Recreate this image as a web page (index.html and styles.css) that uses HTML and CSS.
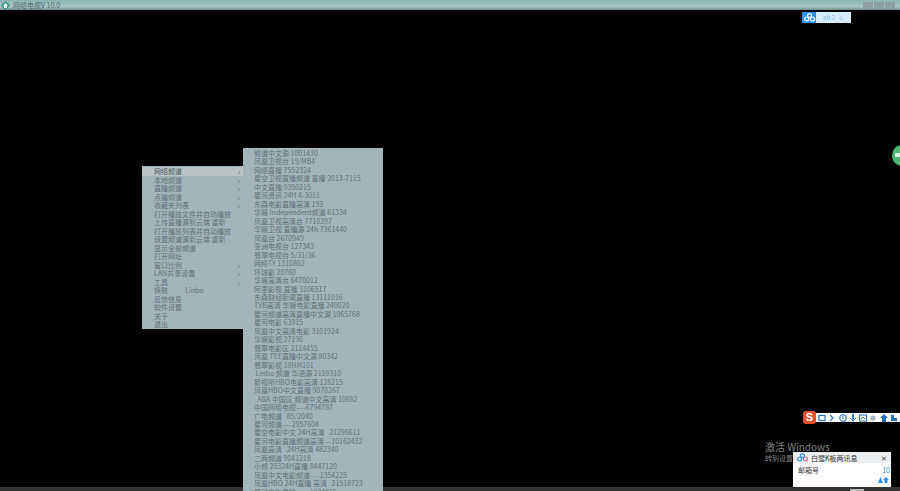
FILE: index.html
```html
<!DOCTYPE html>
<html lang="zh-CN">
<head>
  <meta charset="UTF-8" />
  <meta name="viewport" content="width=device-width, initial-scale=1.0"/>
  <title>网络电视软件</title>
  <link rel="stylesheet" href="styles.css">
</head>
<body>

  <header class="titlebar">
    <svg class="app-icon" width="9" height="9" viewBox="0 0 9 9"><path d="M4.5 0 9 4.5 4.5 9 0 4.500z" fill="#2f9e7c"/><path d="M4.500 2 7 4.500H6V7H3V4.500H2z" fill="#fff"/></svg>
    <span class="app-title">网络电视V 10.0</span>
    <div class="win-buttons">
      <span class="win-btn"></span>
      <span class="win-btn"></span>
      <span class="win-btn"></span>
    </div>
  </header>

  <main class="screen">

    <div class="cloud-badge">
      <span class="cloud-icon">
        <svg width="11" height="9" viewBox="0 0 11 9"><circle cx="5.500" cy="2.600" r="2" fill="none" stroke="#fff" stroke-width="1.200"/><circle cx="2.600" cy="6" r="2" fill="none" stroke="#fff" stroke-width="1.200"/><circle cx="8.400" cy="6" r="2" fill="none" stroke="#fff" stroke-width="1.200"/></svg>
      </span>
      <span class="cloud-text">ab:2 &nbsp;☺</span>
    </div>

    <div class="side-ball"><span class="side-ball-mark"></span></div>

    <ul class="menu main-menu">
      <li class="active">网络频道<i>›</i></li>
      <li>本地频道<i>›</i></li>
      <li>直播频道<i>›</i></li>
      <li>点播频道<i>›</i></li>
      <li>收藏夹列表<i>›</i></li>
      <li>打开播放文件并自动播放</li>
      <li>上传直播源到云端 重新</li>
      <li>打开播放列表并自动播放</li>
      <li>设置频道源到云端 重新</li>
      <li>显示全部频道</li>
      <li>打开网址</li>
      <li>窗口比例<i>›</i></li>
      <li>LAN共享设置<i>›</i></li>
      <li>工具<i>›</i></li>
      <li class="with-note">换肤<span class="note">Linbo</span></li>
      <li>反馈信息</li>
      <li>软件设置</li>
      <li>关于</li>
      <li>退出</li>
    </ul>

    <ul class="menu sub-menu">
      <li>频道中文源 1001430</li>
      <li>凤凰卫视台 19/MB4</li>
      <li>网络直播 7552324</li>
      <li>星空卫视直播频道 直播 2013-7115</li>
      <li>中文直播 9350215</li>
      <li>星河资讯 24H 4-3011</li>
      <li>东森电影直播高清 193</li>
      <li>华娱 Independent频道 61334</li>
      <li>凤凰卫视高清台 7710397</li>
      <li>华娱卫视 直播源 24h 7361440</li>
      <li>凤凰台 2670949</li>
      <li>亚洲电视台 127343</li>
      <li>翡翠电视台 5/31/36</li>
      <li>网络TY 1310802</li>
      <li>环球影 20760</li>
      <li>华娱高清台 6470012</li>
      <li>阿里影视 直播 3106517</li>
      <li>东森财经新闻直播 13111016</li>
      <li>TVB高清 华娱电影直播 240020</li>
      <li>星河频道高清直播中文源 1065768</li>
      <li>星河电影 63915</li>
      <li>凤凰中文高清电影 3101924</li>
      <li>华娱影视 27190</li>
      <li>翡翠电影区 2114455</li>
      <li>凤凰 TEE直播中文源 80342</li>
      <li>翡翠影视 18NM101</li>
      <li>&nbsp;Linbo 频道 华语源 2110310</li>
      <li>新视听HBO电影高清 128215</li>
      <li>凤凰HBO中文直播 9070267</li>
      <li>&nbsp;&nbsp;ABA 中国区 频道中文高清 10682</li>
      <li>中国网络电视----6794787</li>
      <li>广电频道 &nbsp;&nbsp;85/2040</li>
      <li>星河频道----2957604</li>
      <li>星空电影中文 24H高清 &nbsp;&nbsp;21296611</li>
      <li>星河电影直播频道高清---10162432</li>
      <li>凤凰高清 &nbsp;&nbsp;24H高清 482340</li>
      <li>二两频道 9041218</li>
      <li>小频 20324H直播 8447120</li>
      <li>凤凰中文电影频道----1354225</li>
      <li>凤凰HBO 24H直播 高清 &nbsp;&nbsp;21518723</li>
      <li>星河电影直播 -----1034855</li>
    </ul>

    <div class="ime-bar">
      <span class="ime-logo">S</span>
      <span class="ime-icons">
        <svg width="8" height="8" viewBox="0 0 8 8"><rect x="1" y="1.500" width="6" height="5" fill="none" stroke="#2370c4" stroke-width="1.200"/></svg>
        <svg width="8" height="8" viewBox="0 0 8 8"><path d="M2 1 5 4 2 7" fill="none" stroke="#2370c4" stroke-width="1.200"/></svg>
        <svg width="8" height="8" viewBox="0 0 8 8"><circle cx="4" cy="4" r="3.200" fill="none" stroke="#2370c4" stroke-width="1.100"/><path d="M4 2v3" stroke="#2370c4"/></svg>
        <svg width="8" height="8" viewBox="0 0 8 8"><rect x="3" y="0" width="2" height="5" fill="#2370c4"/><path d="M1 4q3 4 6 0M4 6v2" fill="none" stroke="#2370c4"/></svg>
        <svg width="8" height="8" viewBox="0 0 8 8"><rect x=".5" y="1" width="7" height="6" fill="none" stroke="#2370c4"/><path d="M2 5 4 3l2 2" fill="none" stroke="#2370c4"/></svg>
        <svg width="8" height="8" viewBox="0 0 8 8"><circle cx="4" cy="4" r="2.600" fill="#9fb4c4"/></svg>
        <svg width="8" height="8" viewBox="0 0 8 8"><path d="M4 0 8 4H6v4H2V4H0z" fill="#2370c4"/></svg>
        <svg width="8" height="8" viewBox="0 0 8 8"><path d="M1 1h3v3h3v3H1z" fill="#2370c4"/></svg>
      </span>
    </div>

    <div class="activate">
      <div class="activate-title">激活 Windows</div>
      <div class="activate-sub">转到设置</div>
    </div>

    <div class="notice">
      <div class="notice-head">
        <svg width="11" height="9" viewBox="0 0 11 9"><circle cx="5.500" cy="2.600" r="2" fill="none" stroke="#2f8fe8" stroke-width="1.200"/><circle cx="2.600" cy="6" r="2" fill="none" stroke="#2f8fe8" stroke-width="1.200"/><circle cx="8.400" cy="6" r="2" fill="none" stroke="#e86a8a" stroke-width="1.200"/></svg>
        <span class="notice-title">白鹭K板两讯息</span>
        <span class="notice-close">✕</span>
      </div>
      <div class="notice-row"><span>邮箱号</span><span class="notice-count">10</span></div>
      <div class="notice-foot">
        <svg width="11" height="6" viewBox="0 0 11 6"><path d="M2.500 0 5 6H0zM8 0l3 3H9.500v3h-3V3H5z" fill="#2f8fe8"/></svg>
      </div>
    </div>

  </main>

  <footer class="taskbar"><span class="task-mark"></span></footer>

</body>
</html>
```

FILE: styles.css
```css
html, body {
  margin: 0;
  padding: 0;
  height: 100%;
}

body {
  display: flex;
  flex-direction: column;
  width: 900px;
  height: 491px;
  overflow: hidden;
  background: #000;
  font-family: "Noto Sans CJK SC", "Liberation Sans", sans-serif;
}

.titlebar {
  flex: 0 0 10px;
  display: flex;
  align-items: center;
  gap: 3px;
  padding: 0 5px 0 1px;
  background: linear-gradient(#8db3b3, #a9c6c6 70%, #6d8a8c);
}

.app-title {
  font-size: 7px;
  line-height: 9px;
  color: #51686c;
}

.win-buttons {
  display: flex;
  gap: 1px;
  margin-left: auto;
}

.win-btn {
  width: 10px;
  height: 7px;
  background: #8d9ea0;
}

.screen {
  position: relative;
  flex: 1;
}

.taskbar {
  position: relative;
  flex: 0 0 4px;
  background: #333;
}

.task-mark {
  position: absolute;
  left: 850px;
  top: 2px;
  width: 14px;
  height: 2px;
  background: #bbb;
}

/* menus */
.menu {
  position: absolute;
  z-index: 1;
  margin: 0;
  list-style: none;
  background: #a1b5ba;
  color: #607176;
  font-size: 7px;
}

.menu li {
  position: relative;
  height: 8.47px;
  line-height: 8.47px;
  white-space: nowrap;
}

.menu li i {
  position: absolute;
  right: 3px;
  top: 0;
  font-style: normal;
}

.main-menu {
  left: 142px;
  top: 156px;
  width: 101px;
  height: 163px;
  padding: 1px 0 0;
  box-sizing: border-box;
}

.main-menu li {
  padding-left: 12px;
}

.main-menu .active {
  background: #b9c3c5;
  height: 9px;
  line-height: 9px;
  color: #4d5a5e;
}

.note {
  position: absolute;
  left: 43px;
}

.sub-menu {
  left: 243px;
  top: 138px;
  width: 140px;
  height: 343px;
  padding: 1px 0 0 11px;
  box-sizing: border-box;
  overflow: hidden;
}

/* top right badge */
.cloud-badge {
  position: absolute;
  left: 802px;
  top: 2px;
  display: flex;
  width: 49px;
  height: 11px;
}

.cloud-icon {
  display: flex;
  align-items: center;
  justify-content: center;
  width: 14px;
  background: #2a93f5;
}

.cloud-text {
  flex: 1;
  background: #d6eefc;
  color: #7fb4d6;
  font-size: 6px;
  line-height: 11px;
  text-align: center;
}

.side-ball {
  position: absolute;
  left: 892px;
  top: 135px;
  width: 20px;
  height: 21px;
  border-radius: 50%;
  background: #48b872;
}

.side-ball-mark {
  position: absolute;
  left: 3px;
  top: 8px;
  width: 5px;
  height: 4px;
  background: #d9f2e2;
}

/* input method bar */
.ime-bar {
  position: absolute;
  left: 803px;
  top: 401px;
  display: flex;
  align-items: center;
  width: 97px;
  height: 13px;
  background: linear-gradient(#000 2px, #fff 2px, #fff 11px, #000 11px);
}

.ime-logo {
  flex: 0 0 13px;
  height: 13px;
  background: #e8502a;
  border-radius: 3px;
  color: #fff;
  font-family: "Liberation Sans", sans-serif;
  font-size: 11px;
  font-weight: bold;
  line-height: 13px;
  text-align: center;
}

.ime-icons {
  display: flex;
  gap: 2.3px;
  padding-left: 2px;
}

.activate {
  position: absolute;
  left: 765px;
  top: 431px;
  color: #858585;
}

.activate-title {
  font-size: 10px;
  line-height: 12px;
}

.activate-sub {
  font-size: 7px;
  line-height: 10px;
}

/* notification popup */
.notice {
  position: absolute;
  left: 793px;
  top: 442px;
  width: 98px;
  height: 35px;
  background: #fff;
  font-size: 7px;
  color: #333;
}

.notice-head {
  display: flex;
  align-items: center;
  gap: 3px;
  height: 11px;
  padding: 0 4px;
  background: #eceff1;
}

.notice-close {
  margin-left: auto;
  color: #444;
}

.notice-row {
  display: flex;
  justify-content: space-between;
  padding: 2px 1px 0 5px;
  line-height: 10px;
}

.notice-count {
  color: #2f8fe8;
}

.notice-foot {
  display: flex;
  justify-content: flex-end;
  padding: 2px 2px 0 0;
}
```
